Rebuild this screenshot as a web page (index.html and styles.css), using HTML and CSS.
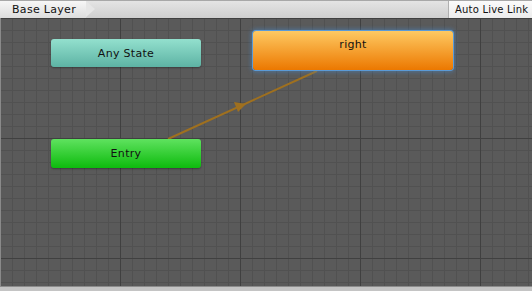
FILE: index.html
```html
<!DOCTYPE html>
<html lang="en">
<head>
    <meta charset="UTF-8">
    <title>Animator</title>
    <link rel="stylesheet" href="styles.css">
</head>
<body>
    <div class="animator">
        <div class="toolbar">
            <div class="crumb">Base Layer</div>
            <button class="live-link">Auto Live Link</button>
        </div>
        <div class="graph">
            <svg class="links" width="532" height="269" viewBox="0 0 532 269">
                <line x1="168" y1="121" x2="317" y2="53" stroke="#9f701f" stroke-width="2"/>
                <!-- arrow head at the middle of the transition -->
                <polygon points="246,86 234,84 238,94" fill="#9f701f"/>
            </svg>
            <div class="state any-state" style="left: 51px; top: 21px;">Any State</div>
            <div class="state entry" style="left: 51px; top: 121px;">Entry</div>
            <div class="state default selected" style="left: 253px; top: 13px;">right</div>
        </div>
        <div class="statusbar"></div>
    </div>
</body>
</html>
```
FILE: styles.css
```css
body {
    margin: 0;
    padding: 0;
    overflow: hidden;
    font-family: "DejaVu Sans", Verdana, sans-serif;
    font-size: 11px;
}
.animator {
    width: 532px;
    height: 291px;
    display: flex;
    flex-direction: column;
}
.toolbar {
    height: 18px;
    display: flex;
    justify-content: space-between;
    background: linear-gradient(#e4e4e4, #cfcfcf);
    border-top: 1px solid #a8a8a8;
    box-sizing: border-box;
}
.crumb {
    position: relative;
    padding: 0 10px 0 12px;
    line-height: 17px;
    width: 64px;
    color: #111;
    letter-spacing: 0.3px;
    background: linear-gradient(#f7f7f7, #dddddd);
}
.crumb::after {
    content: "";
    position: absolute;
    right: -9px;
    top: 0;
    border-top: 8.5px solid transparent;
    border-bottom: 8.5px solid transparent;
    border-left: 9px solid #e6e6e6;
}
.live-link {
    font-family: inherit;
    font-size: 10px;
    letter-spacing: 0.2px;
    color: #111;
    width: 84px;
    margin: 0;
    padding: 0 0 0 6px;
    text-align: left;
    white-space: nowrap;
    height: 17px;
    border: none;
    border-left: 1px solid #b0b0b0;
    background: linear-gradient(#fbfbfb, #ececec);
}
.graph {
    position: relative;
    flex: 1;
    background-color: #5a5a5a;
    background-image:
        linear-gradient(90deg, #404040 1px, transparent 1px),
        linear-gradient(#404040 1px, transparent 1px),
        linear-gradient(90deg, #515151 1px, transparent 1px),
        linear-gradient(#515151 1px, transparent 1px);
    background-size: 120px 120px, 120px 120px, 12px 12px, 12px 12px;
    box-shadow: inset 1px 0 #8a8a8a;
}
.links {
    position: absolute;
    left: 0;
    top: 0;
}
.state {
    position: absolute;
    width: 150px;
    height: 28px;
    border-radius: 3px;
    text-align: center;
    line-height: 29px;
    color: #111;
    letter-spacing: 0.3px;
    box-shadow: 0 1px 2px rgba(0, 0, 0, 0.35);
}
.any-state {
    background: linear-gradient(#93e0ce, #5db3a4);
}
.entry {
    height: 29px;
    line-height: 30px;
    background: linear-gradient(#5fe25f, #0dbb0d);
}
.default {
    width: 200px;
    height: 39px;
    line-height: 28px;
    background: linear-gradient(#fec962, #ec7800);
}
.selected {
    box-shadow: 0 0 0 1px #5b9ad6, 0 0 4px 2px rgba(70, 140, 210, 0.5);
}
.statusbar {
    height: 4px;
    background: #c4c4c4;
    border-top: 1px solid #8c8c8c;
}
```
